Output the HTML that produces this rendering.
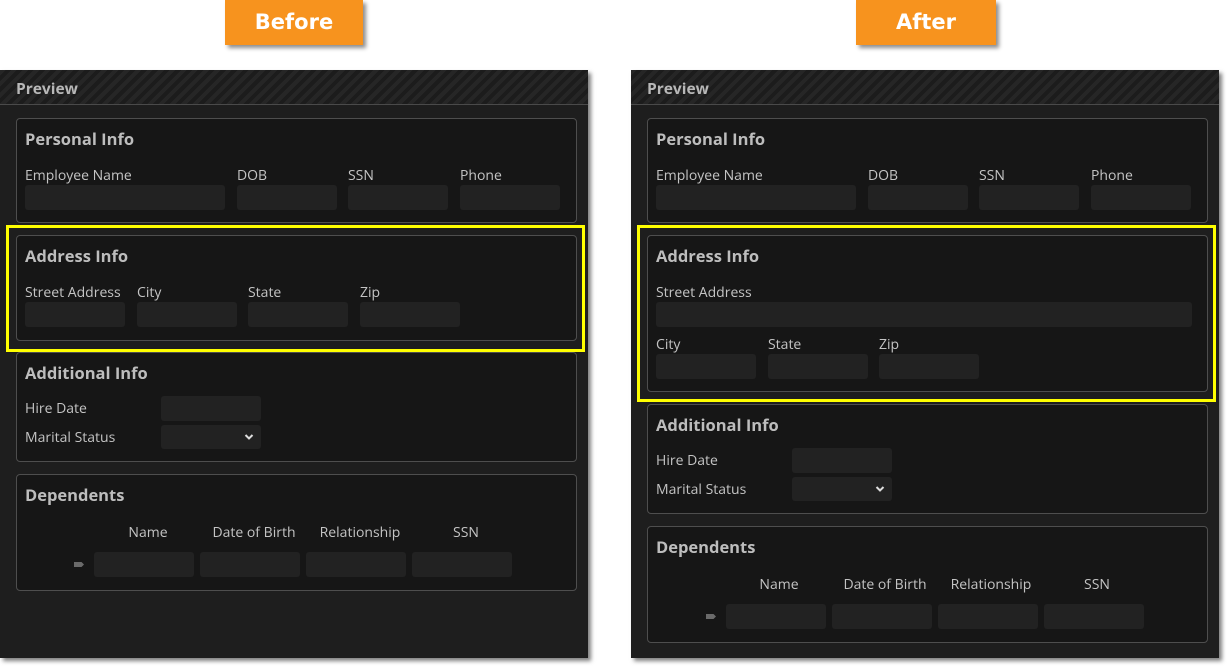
<!DOCTYPE html>
<html><head><meta charset="utf-8"><style>
*{box-sizing:border-box;margin:0;padding:0}
body{width:1227px;height:666px;background:#fff;position:relative;overflow:hidden;font-family:"Open Sans","DejaVu Sans","Liberation Sans",sans-serif;}
.a{position:absolute}
.badge{background:#f7931e;color:#fff;font-weight:bold;font-size:21px;text-align:center;line-height:45px;top:0;height:45px;box-shadow:3px 3px 4px rgba(0,0,0,.45);font-family:"DejaVu Sans","Liberation Sans",sans-serif}
.panel{top:70px;width:588px;height:588px;background:#1e1e1e;box-shadow:3px 3px 4px rgba(0,0,0,.5)}
.hdr{left:0;top:0;width:588px;height:35px;border-bottom:1px solid #4a4a4a;background:repeating-linear-gradient(135deg,#262626 0 4px,#1c1c1c 4px 8px);color:#b8b8b8;font-weight:bold;font-size:15.5px;line-height:36px;padding-left:16px}
.sec{background:#161616;border:1px solid #4e4e4e;border-radius:4px;left:16px;width:561px}
.t{color:#bdbdbd;font-weight:bold;font-size:16.5px;line-height:20px}
.l{color:#c4c4c4;font-size:14px;line-height:18px;white-space:nowrap}
.i{background:#222;border-radius:3px;height:25px}
.y{border:3px solid #ffff00;left:6px;width:579px}
.mk{width:10px;height:5px;background:#6a6a6a;clip-path:polygon(0 0,75% 0,100% 50%,75% 100%,0 100%)}
</style></head><body>
<div class="a badge" style="left:225px;width:138px">Before</div>
<div class="a badge" style="left:856px;width:140px">After</div>

<!-- LEFT -->
<div class="a panel" style="left:0">
 <div class="a hdr">Preview</div>
 <div class="a sec" style="top:48px;height:105px">
  <div class="a t" style="left:8px;top:10px">Personal Info</div>
  <div class="a l" style="left:8px;top:48px">Employee Name</div>
  <div class="a l" style="left:220px;top:48px">DOB</div>
  <div class="a l" style="left:331px;top:48px">SSN</div>
  <div class="a l" style="left:443px;top:48px">Phone</div>
  <div class="a i" style="left:8px;top:66px;width:200px"></div>
  <div class="a i" style="left:220px;top:66px;width:100px"></div>
  <div class="a i" style="left:331px;top:66px;width:100px"></div>
  <div class="a i" style="left:443px;top:66px;width:100px"></div>
 </div>
 <div class="a y" style="top:155px;height:127px"></div>
 <div class="a sec" style="top:165px;height:106px">
  <div class="a t" style="left:8px;top:10px">Address Info</div>
  <div class="a l" style="left:8px;top:48px">Street Address</div>
  <div class="a l" style="left:120px;top:48px">City</div>
  <div class="a l" style="left:231px;top:48px">State</div>
  <div class="a l" style="left:343px;top:48px">Zip</div>
  <div class="a i" style="left:8px;top:66px;width:100px"></div>
  <div class="a i" style="left:120px;top:66px;width:100px"></div>
  <div class="a i" style="left:231px;top:66px;width:100px"></div>
  <div class="a i" style="left:343px;top:66px;width:100px"></div>
 </div>
 <div class="a sec" style="top:282px;height:110px">
  <div class="a t" style="left:8px;top:10px">Additional Info</div>
  <div class="a l" style="left:8px;top:47px">Hire Date</div>
  <div class="a i" style="left:144px;top:43px;width:100px"></div>
  <div class="a l" style="left:8px;top:76px">Marital Status</div>
  <div class="a i" style="left:144px;top:72px;width:100px;height:24px"><svg class="a" style="left:83px;top:8px" width="10" height="8" viewBox="0 0 10 8"><path d="M1.5 2 L5 5.5 L8.5 2" stroke="#ddd" stroke-width="2" fill="none"/></svg></div>
 </div>
 <div class="a sec" style="top:404px;height:117px">
  <div class="a t" style="left:8px;top:10px">Dependents</div>
  <div class="a l" style="left:81px;top:49px;width:100px;text-align:center">Name</div>
  <div class="a l" style="left:187px;top:49px;width:100px;text-align:center">Date of Birth</div>
  <div class="a l" style="left:293px;top:49px;width:100px;text-align:center">Relationship</div>
  <div class="a l" style="left:399px;top:49px;width:100px;text-align:center">SSN</div>
  <div class="a mk" style="left:57px;top:87px"></div>
  <div class="a i" style="left:77px;top:77px;width:100px"></div>
  <div class="a i" style="left:183px;top:77px;width:100px"></div>
  <div class="a i" style="left:289px;top:77px;width:100px"></div>
  <div class="a i" style="left:395px;top:77px;width:100px"></div>
 </div>
</div>

<!-- RIGHT -->
<div class="a panel" style="left:631px">
 <div class="a hdr">Preview</div>
 <div class="a sec" style="top:48px;height:105px">
  <div class="a t" style="left:8px;top:10px">Personal Info</div>
  <div class="a l" style="left:8px;top:48px">Employee Name</div>
  <div class="a l" style="left:220px;top:48px">DOB</div>
  <div class="a l" style="left:331px;top:48px">SSN</div>
  <div class="a l" style="left:443px;top:48px">Phone</div>
  <div class="a i" style="left:8px;top:66px;width:200px"></div>
  <div class="a i" style="left:220px;top:66px;width:100px"></div>
  <div class="a i" style="left:331px;top:66px;width:100px"></div>
  <div class="a i" style="left:443px;top:66px;width:100px"></div>
 </div>
 <div class="a y" style="top:155px;height:177px"></div>
 <div class="a sec" style="top:165px;height:157px">
  <div class="a t" style="left:8px;top:10px">Address Info</div>
  <div class="a l" style="left:8px;top:48px">Street Address</div>
  <div class="a i" style="left:8px;top:66px;width:536px"></div>
  <div class="a l" style="left:8px;top:100px">City</div>
  <div class="a l" style="left:120px;top:100px">State</div>
  <div class="a l" style="left:231px;top:100px">Zip</div>
  <div class="a i" style="left:8px;top:118px;width:100px"></div>
  <div class="a i" style="left:120px;top:118px;width:100px"></div>
  <div class="a i" style="left:231px;top:118px;width:100px"></div>
 </div>
 <div class="a sec" style="top:334px;height:110px">
  <div class="a t" style="left:8px;top:10px">Additional Info</div>
  <div class="a l" style="left:8px;top:47px">Hire Date</div>
  <div class="a i" style="left:144px;top:43px;width:100px"></div>
  <div class="a l" style="left:8px;top:76px">Marital Status</div>
  <div class="a i" style="left:144px;top:72px;width:100px;height:24px"><svg class="a" style="left:83px;top:8px" width="10" height="8" viewBox="0 0 10 8"><path d="M1.5 2 L5 5.5 L8.5 2" stroke="#ddd" stroke-width="2" fill="none"/></svg></div>
 </div>
 <div class="a sec" style="top:456px;height:117px">
  <div class="a t" style="left:8px;top:10px">Dependents</div>
  <div class="a l" style="left:81px;top:49px;width:100px;text-align:center">Name</div>
  <div class="a l" style="left:187px;top:49px;width:100px;text-align:center">Date of Birth</div>
  <div class="a l" style="left:293px;top:49px;width:100px;text-align:center">Relationship</div>
  <div class="a l" style="left:399px;top:49px;width:100px;text-align:center">SSN</div>
  <div class="a mk" style="left:58px;top:87px"></div>
  <div class="a i" style="left:78px;top:77px;width:100px"></div>
  <div class="a i" style="left:184px;top:77px;width:100px"></div>
  <div class="a i" style="left:290px;top:77px;width:100px"></div>
  <div class="a i" style="left:396px;top:77px;width:100px"></div>
 </div>
</div>
</body></html>
